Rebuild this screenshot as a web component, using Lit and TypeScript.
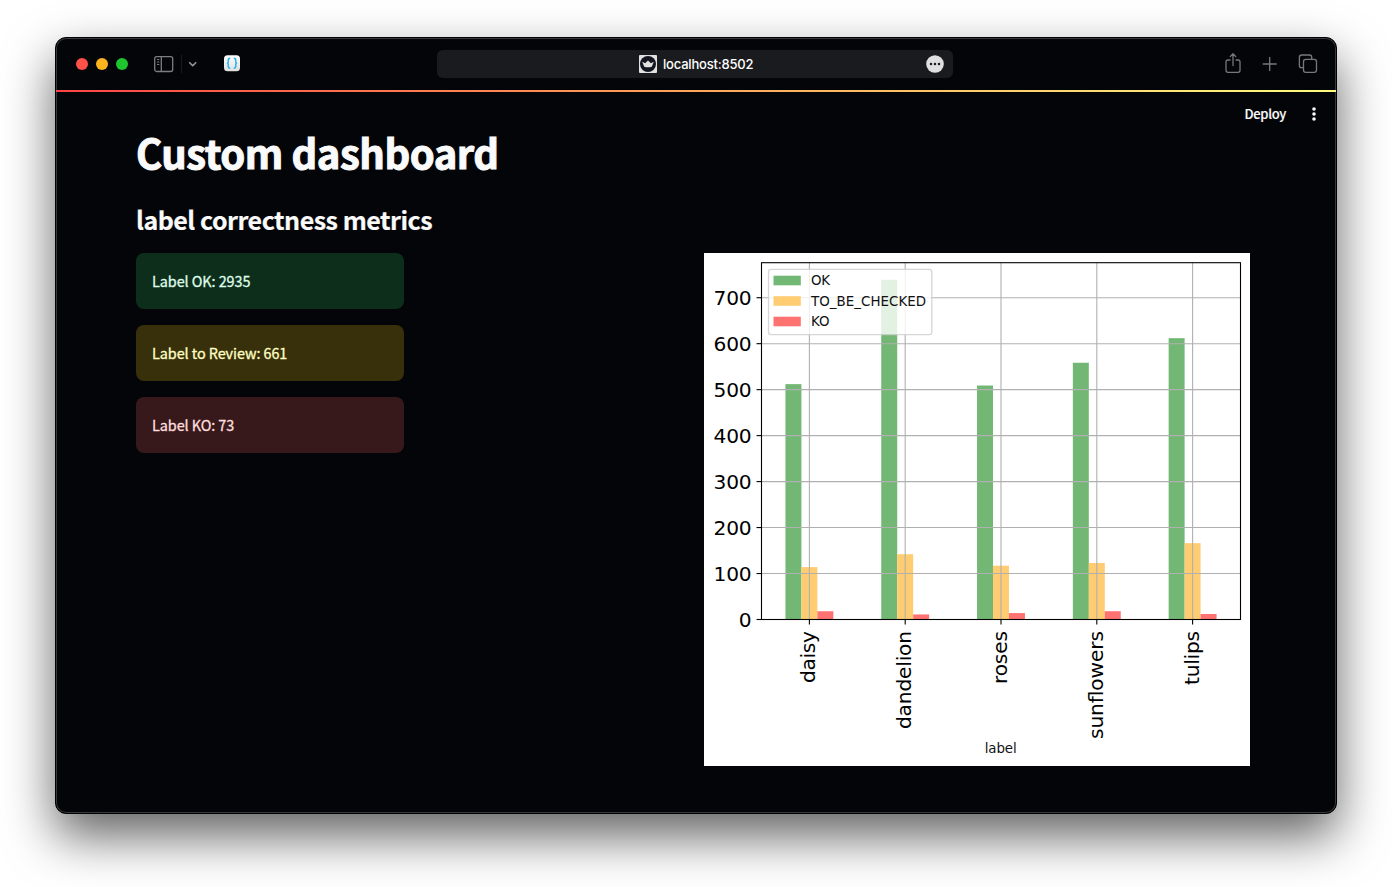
import { LitElement, html, svg, css } from "lit";
import { customElement } from "lit/decorators.js";

interface Flower {
  name: string;
  ok: number;
  check: number;
  ko: number;
  len: number;
}

const FLOWERS: Flower[] = [
  { name: "daisy", ok: 512, check: 114, ko: 18, len: 52 },
  { name: "dandelion", ok: 739, check: 142, ko: 11, len: 98 },
  { name: "roses", ok: 509, check: 117, ko: 14, len: 53 },
  { name: "sunflowers", ok: 558.5, check: 123, ko: 18, len: 108 },
  { name: "tulips", ok: 612, check: 166, ko: 12, len: 54 },
];

@customElement("label-chart")
export class LabelChart extends LitElement {
  static styles = css`
    :host { display: block; width: 546px; height: 513px; background: #fff; }
    svg { display: block; font-family: "DejaVu Sans", sans-serif; fill: #000; }
    .tick { font-size: 20.2px; }
    .small { font-size: 13.4px; fill: #111; }
    .grid { stroke: #b0b0b0; stroke-width: 1.1; }
    .axis { stroke: #000; stroke-width: 1.1; fill: none; }
    .ok { fill: #73b774; }
    .check { fill: #ffcc72; }
    .ko { fill: #ff7272; }
    .legend { fill: #fff; fill-opacity: 0.8; stroke: #ccc; stroke-opacity: 0.8; stroke-width: 1.3; }
  `;

  render() {
    const left = 57.5, right = 536.5, top = 9.7, base = 366.5;
    const unit = 0.4597;
    const step = (right - left) / 5;
    const bar = step / 6;
    const cx = (i: number) => left + step * (i + 0.5);
    const y = (v: number) => base - v * unit;
    const values = [0, 100, 200, 300, 400, 500, 600, 700];
    const rect = (x: number, v: number, cls: string) =>
      svg`<rect class=${cls} x=${x} y=${y(v)} width=${bar} height=${v * unit}></rect>`;
    const legend: [string, string, number, number][] = [
      ["ok", "OK", 32, 19],
      ["check", "TO_BE_CHECKED", 52.5, 115],
      ["ko", "KO", 73, 18.5],
    ];
    return html`<svg width="546" height="513" viewBox="0 0 546 513">
      ${FLOWERS.map((f, i) => svg`
        ${rect(cx(i) - bar * 1.5, f.ok, "ok")}
        ${rect(cx(i) - bar * 0.5, f.check, "check")}
        ${rect(cx(i) + bar * 0.5, f.ko, "ko")}`)}
      ${FLOWERS.map((_, i) => svg`<line class="grid" x1=${cx(i)} x2=${cx(i)} y1=${top} y2=${base}></line>`)}
      ${values.map((v) => svg`<line class="grid" x1=${left} x2=${right} y1=${y(v)} y2=${y(v)}></line>`)}
      <rect class="axis" x=${left} y=${top} width=${right - left} height=${base - top}></rect>
      ${values.map((v) => svg`
        <line class="axis" x1=${left - 5} x2=${left} y1=${y(v)} y2=${y(v)}></line>
        <text class="tick" x="47.6" y=${y(v) + 7.6} text-anchor="end" textLength=${v ? 38 : 12.8}>${v}</text>`)}
      ${FLOWERS.map((f, i) => svg`
        <line class="axis" x1=${cx(i)} x2=${cx(i)} y1=${base} y2=${base + 5}></line>
        <text class="tick" text-anchor="end" textLength=${f.len}
          transform="translate(${cx(i) + 5.9} 378) rotate(-90)">${f.name}</text>`)}
      <text class="small" x="296.7" y="500.3" text-anchor="middle" textLength="32">label</text>
      <rect class="legend" x="64.5" y="16.3" width="163.3" height="65.3" rx="2.6"></rect>
      ${legend.map(([cls, name, base, len]) => svg`
        <rect class=${cls} x="69.5" y=${base - 9.3} width="27.3" height="9.6"></rect>
        <text class="small" x="107" y=${base + 0.3} textLength=${len}>${name}</text>`)}
    </svg>`;
  }
}

@customElement("app-root")
export class AppRoot extends LitElement {
  static styles = css`
    :host {
      display: block;
      box-sizing: border-box;
      width: 1392px;
      height: 887px;
      padding: 37px 55px 73px;
      background: #fff;
      overflow: hidden;
      color: #fafafa;
      font-family: "Noto Sans CJK SC", "Noto Sans", sans-serif;
    }
    .window {
      box-sizing: border-box;
      width: 1282px;
      height: 777px;
      border: 1px solid #000;
      border-radius: 11px;
      background: #030508;
      box-shadow: inset 0 0 0 1px #38393c, 0 22px 50px rgba(0, 0, 0, 0.62);
    }
    .toolbar {
      display: grid;
      grid-template-columns: 381px 516px 1fr;
      height: 52px;
      align-items: center;
    }
    .left { display: flex; align-items: center; padding-left: 20px; }
    .dot { width: 12px; height: 12px; border-radius: 50%; margin-right: 8px; }
    .red { background: #ff5049; }
    .yellow { background: #ffb31f; }
    .green { background: #1fc52f; }
    svg { display: block; }
    .sidebar { margin-left: 18px; }
    .rule { width: 1px; height: 18px; margin-left: 7px; background: #18191c; }
    .chevron { margin-left: 6px; }
    .tab { margin-left: 25px; }
    .address {
      display: flex;
      align-items: center;
      box-sizing: border-box;
      height: 28px;
      padding: 0 9px 0 202px;
      border-radius: 6px;
      background: #1a1b1e;
      font: 500 13px/28px Inter, sans-serif;
      color: #fff;
    }
    .url { margin-left: 6px; width: 91px; white-space: nowrap; letter-spacing: -0.2px; }
    .more { margin-left: auto; }
    .right { display: flex; align-items: center; justify-content: flex-end; gap: 18px; padding-right: 18px; }
    .share { margin-bottom: 2px; }
    .line { height: 2px; background: linear-gradient(90deg, #ff4545, #ffa55a 50%, #fffd80); }
    .header { display: flex; justify-content: flex-end; height: 44px; align-items: center; padding-right: 13px; }
    .deploy { font-size: 13px; font-weight: 500; line-height: 20px; margin-right: 19px; letter-spacing: -0.35px; -webkit-text-stroke: 0.15px currentColor; }
    .main { padding: 0 80px; }
    h1, h2 { margin: 0; white-space: nowrap; font-weight: 700; }
    h1 { font-size: 40px; line-height: 54px; margin-top: -11px; letter-spacing: -0.48px; -webkit-text-stroke: 1px currentColor; }
    h2 { font-size: 25px; line-height: 36px; margin-top: 22px; letter-spacing: -0.48px; -webkit-text-stroke: 0.2px currentColor; }
    .columns { display: grid; grid-template-columns: 552px 552px; gap: 16px; margin-top: 16px; }
    .cards { display: grid; grid-template-columns: 268px; gap: 16px; align-content: start; }
    .card {
      box-sizing: border-box;
      height: 56px;
      padding: 16px;
      border-radius: 8px;
      font-size: 14.4px;
      line-height: 24px;
      letter-spacing: -0.06px;
      -webkit-text-stroke: 0.3px currentColor;
      white-space: nowrap;
    }
    .success { background: #0e2e1c; color: #dffde9; }
    .warning { background: #38300b; color: #ffffc2; }
    .error { background: #37191b; color: #ffdede; }
  `;

  render() {
    return html`
      <div class="window">
        <div class="toolbar">
          <div class="left">
            <div class="dot red"></div><div class="dot yellow"></div><div class="dot green"></div>
            <svg class="sidebar" width="20" height="18" viewBox="0 0 20 18" fill="none" stroke="#7c7d7f">
              <rect x="0.7" y="1.7" width="18" height="14.8" rx="2" stroke-width="1.3"></rect>
              <path d="M7.3 1.7v14.8" stroke-width="1.3"></path>
              <path d="M3 4.5h2.3M3 7h2.3M3 9.5h2.3" stroke-width="1"></path>
            </svg>
            <div class="rule"></div>
            <svg class="chevron" width="10" height="10" viewBox="0 0 10 10" fill="none" stroke="#98999b" stroke-width="1.6" stroke-linecap="round" stroke-linejoin="round">
              <path d="M1.7 3.7l3 3 3-3"></path>
            </svg>
            <svg class="tab" width="18" height="18" viewBox="0 0 18 18">
              <defs><linearGradient id="tile" x2="0" y2="1"><stop stop-color="#fff"></stop><stop offset="1" stop-color="#dedede"></stop></linearGradient></defs>
              <rect x="1" y="0.2" width="16" height="16" rx="3.5" fill="url(#tile)"></rect>
              <path transform="translate(0 -0.7)" d="M7.2 4C5.6 4 5.3 4.5 5.3 5.7v1.5C5.3 8.3 5 8.8 4 9c1 .2 1.3.7 1.3 1.8v1.5c0 1.2.3 1.7 1.9 1.7M10.8 4c1.6 0 1.9.5 1.9 1.7v1.5c0 1.1.3 1.6 1.3 1.8-1 .2-1.3.7-1.3 1.8v1.5c0 1.2-.3 1.7-1.9 1.7" fill="none" stroke="#27b2ee" stroke-width="1.5"></path>
            </svg>
          </div>
          <div class="address">
            <svg width="18" height="18" viewBox="0 0 18 18">
              <rect width="18" height="18" rx="1" fill="#e2e2e3"></rect>
              <circle cx="9" cy="9" r="8" fill="#12151f"></circle>
              <path d="M3.2 6.8l2.9 1.4L9 5.5l2.9 2.7 2.9-1.4-2 5q-3.8 1-7.6 0z" fill="#e2e2e3"></path>
            </svg>
            <span class="url">localhost:8502</span>
            <svg class="more" width="18" height="18" viewBox="0 0 18 18">
              <circle cx="9" cy="9" r="8.8" fill="#dfdfe0"></circle>
              <g fill="#1a1b1e"><circle cx="5" cy="9" r="1.25"></circle><circle cx="9" cy="9" r="1.25"></circle><circle cx="13" cy="9" r="1.25"></circle></g>
            </svg>
          </div>
          <div class="right">
            <svg class="share" width="18" height="22" viewBox="0 0 18 22" fill="none" stroke="#77787a" stroke-width="1.3" stroke-linecap="round" stroke-linejoin="round">
              <path d="M6 8H4Q2 8 2 10v8.3q0 2 2 2h10q2 0 2-2V10q0-2-2-2h-2M9 13.5V2M6.2 4.6L9 1.8l2.8 2.8"></path>
            </svg>
            <svg width="20" height="20" viewBox="0 0 20 20" stroke="#77787a" stroke-width="1.3" stroke-linecap="round"><path d="M9.7 3.5v13M3.2 10h13"></path></svg>
            <svg width="20" height="20" viewBox="0 0 20 20" fill="none" stroke="#77787a" stroke-width="1.3">
              <rect x="5.5" y="5.3" width="13" height="13" rx="2.2"></rect>
              <path d="M5.5 13.6H3.6q-2.2 0-2.2-2.2V3.2q0-2.2 2.2-2.2h7.9q2.2 0 2.2 2.2v2.1"></path>
            </svg>
          </div>
        </div>
        <div class="line"></div>
        <div class="header">
          <span class="deploy">Deploy</span>
          <svg width="18" height="18" viewBox="0 0 18 18" fill="#fafafa"><circle cx="9" cy="4" r="1.8"></circle><circle cx="9" cy="9" r="1.8"></circle><circle cx="9" cy="14" r="1.8"></circle></svg>
        </div>
        <div class="main">
          <h1>Custom dashboard</h1>
          <h2>label correctness metrics</h2>
          <div class="columns">
            <div class="cards">
              <div class="card success">Label OK: 2935</div>
              <div class="card warning">Label to Review: 661</div>
              <div class="card error">Label KO: 73</div>
            </div>
            <label-chart></label-chart>
          </div>
        </div>
      </div>`;
  }
}
